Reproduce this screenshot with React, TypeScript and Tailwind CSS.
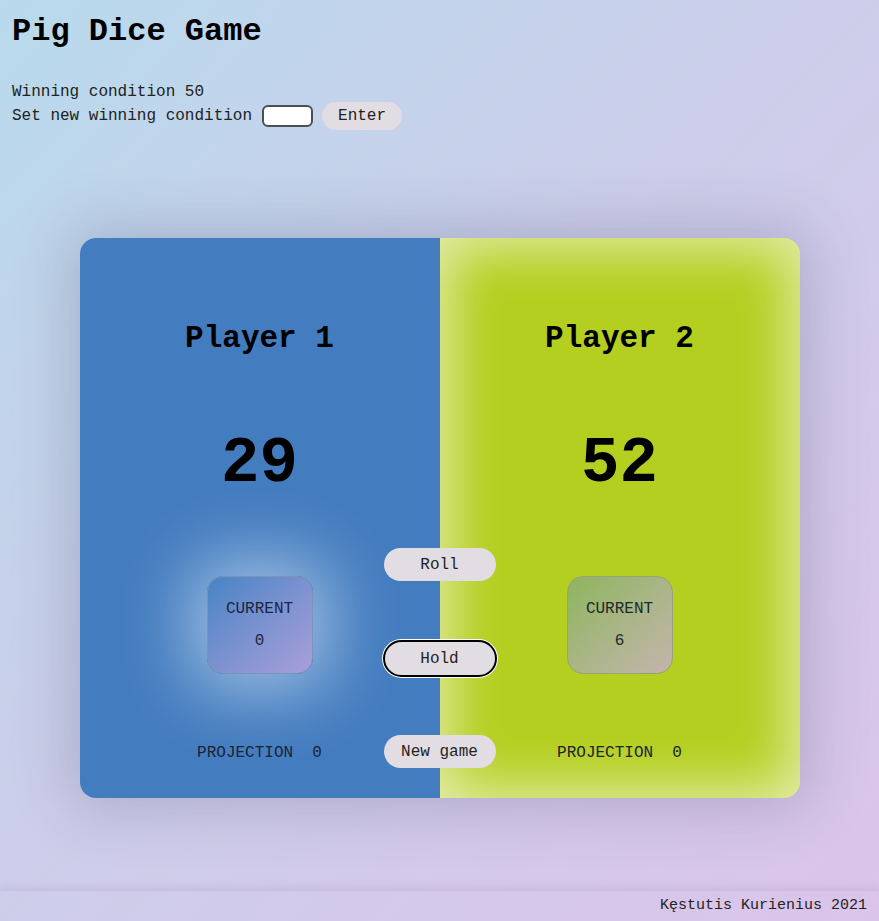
const mono = "font-['Liberation_Mono','Courier_New',monospace]";

type PlayerProps = {
  name: string;
  score: number;
  current: number;
  projection: number;
  active: boolean;
};

function PlayerPanel({ name, score, current, projection, active }: PlayerProps) {
  return (
    <div
      className={
        active
          ? "flex flex-col items-center w-[360px] h-full bg-[#b5cf20] shadow-[inset_0_0_50px_12px_rgba(255,255,255,0.6)]"
          : "flex flex-col items-center w-[360px] h-full bg-[#437cbf]"
      }
    >
      <h2 className="pt-[82px] text-[31px] leading-[38px] font-bold text-black">
        {name}
      </h2>
      <div className="mt-[74px] text-[64px] leading-[64px] font-bold text-black">
        {score}
      </div>
      <div
        className={
          active
            ? "mt-[80px] w-[106px] h-[98px] rounded-[16px] border border-[#9aa07a] bg-gradient-to-br from-[#8db55c] to-[#c4b4ac] flex flex-col items-center justify-center gap-3 text-[#1f2a2a]"
            : "mt-[80px] w-[106px] h-[98px] rounded-[16px] border border-[#7c93b8] bg-gradient-to-br from-[#4583c6] to-[#a99fd9] flex flex-col items-center justify-center gap-3 text-[#1b2740] shadow-[0_0_70px_18px_rgba(220,235,250,0.6)]"
        }
      >
        <span className="text-[16px] leading-[20px]">CURRENT</span>
        <span className="text-[16px] leading-[20px]">{current}</span>
      </div>
      <div className="mt-[69px] text-[16px] leading-[20px] whitespace-pre text-[#1b2433]">
        {"PROJECTION  " + projection}
      </div>
    </div>
  );
}

export default function App() {
  const btn =
    "w-[112px] h-[33px] rounded-full bg-[#e2dde2] text-[16px] text-[#222] flex items-center justify-center";

  return (
    <div
      className={`${mono} min-h-screen flex flex-col bg-gradient-to-br from-[#b8daec] via-[#cdcdea] to-[#dbc4ea] text-black`}
    >
      <main className="flex-1">
        <header className="px-3 pt-[13px]">
          <h1 className="text-[32px] leading-[38px] font-bold">Pig Dice Game</h1>
          <p className="mt-[31px] text-[16px] leading-[20px] text-[#222]">
            Winning condition 50
          </p>
          <div className="flex items-center h-[28px] text-[16px] text-[#222]">
            <span>Set new winning condition</span>
            <input
              type="text"
              className="ml-[10px] w-[51px] h-[22px] rounded-[6px] border-2 border-[#4a4f55] bg-white outline-none"
            />
            <button className="ml-[9px] w-[80px] h-[28px] rounded-full bg-[#e2dde2] text-[16px] text-[#222]">
              Enter
            </button>
          </div>
        </header>

        <section className="relative mx-auto mt-[108px] w-[720px] h-[560px] rounded-[16px] overflow-hidden flex shadow-[0_0_60px_10px_rgba(60,60,90,0.22)]">
          <PlayerPanel name="Player 1" score={29} current={0} projection={0} active={false} />
          <PlayerPanel name="Player 2" score={52} current={6} projection={0} active={true} />

          <div className="absolute left-1/2 top-[310px] -translate-x-1/2 flex flex-col items-center">
            <button className={btn}>Roll</button>
            <button className="mt-[59px] w-[114px] h-[37px] rounded-full bg-[#e2dde2] text-[16px] text-[#222] border-2 border-black ring-1 ring-white">
              Hold
            </button>
            <button className={`${btn} mt-[58px]`}>New game</button>
          </div>
        </section>
      </main>

      <footer className="mt-[92px] h-[31px] flex items-center justify-end px-3 text-[15px] text-[#222] shadow-[0_-2px_8px_rgba(90,70,130,0.12)] border-t border-[#cdbde0]">
        Kęstutis Kurienius 2021
      </footer>
    </div>
  );
}
